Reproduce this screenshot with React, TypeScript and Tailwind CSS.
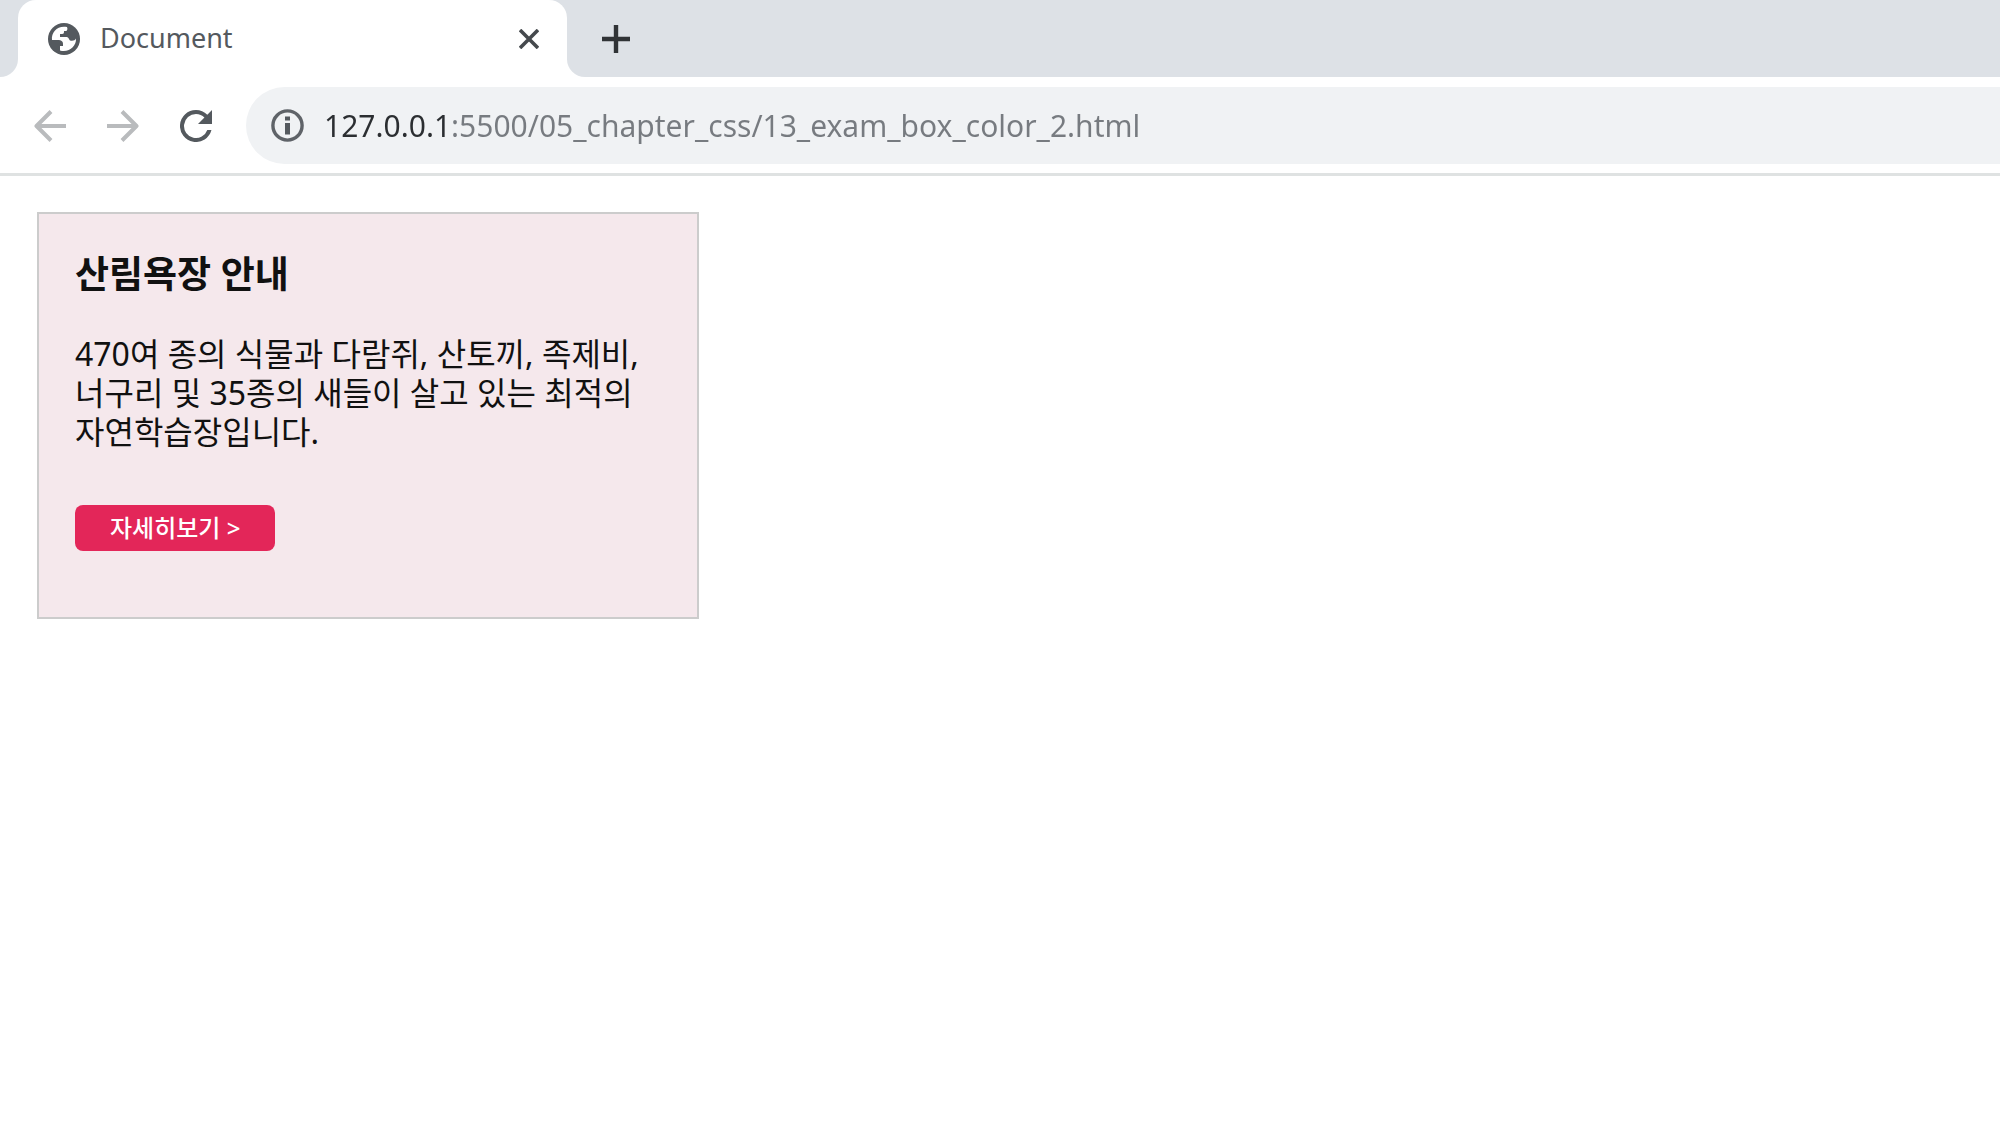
import { useState } from 'react';

const HOST = '127.0.0.1';
const PATH = ':5500/05_chapter_css/13_exam_box_color_2.html';

function GlobeIcon() {
  return (
    <svg viewBox="0 0 32 32" className="size-8 shrink-0" aria-hidden="true">
      <circle cx="16" cy="16" r="16" fill="#54595e" />
      <path d="M19 4C10 2 3 9 4 17H10C13 17 15 18 15 21V23H12V27.5C21 30 28.5 23 28 15.5C27 17.5 25 18 22 17.5C21 17 21 14.5 19 14H12V11H14C16 11 16 10 16 8H18C19 8 20 6 19 4Z" fill="#fff" />
    </svg>
  );
}

function ArrowIcon({ className = '' }: { className?: string }) {
  return (
    <svg viewBox="0 0 32 32" className={`size-8 ${className}`} fill="none" stroke="#b9bbbd" strokeWidth="4" aria-hidden="true">
      <path d="M17 1.5L2.5 16L17 30.5M2.5 16H32" strokeLinejoin="round" />
    </svg>
  );
}

function ReloadIcon() {
  return (
    <svg viewBox="4 4 16 16" className="size-8" fill="#54595e" aria-hidden="true">
      <path d="M17.65 6.35A7.96 7.96 0 0 0 12 4a8 8 0 1 0 7.73 10h-2.08A6 6 0 1 1 12 6c1.66 0 3.14.69 4.22 1.78L13 11h7V4z" />
    </svg>
  );
}

function InfoIcon() {
  return (
    <svg viewBox="0 0 33 33" className="size-[33px] shrink-0" aria-hidden="true">
      <circle cx="16.5" cy="16.5" r="14.6" fill="none" stroke="#5f6368" strokeWidth="3.4" />
      <path d="M14 7.5h5v4h-5zM14 14h5v11.5h-5z" fill="#54595e" />
    </svg>
  );
}

function TabStrip() {
  return (
    <div className="flex h-[77px] bg-[#dde1e6]">
      <div className="w-[18px] bg-white">
        <div className="h-full rounded-br-[18px] bg-[#dde1e6]" />
      </div>
      <div className="flex w-[549px] items-center rounded-t-[18px] bg-white pr-[24px] pl-[30px]">
        <GlobeIcon />
        <span className="ml-5 flex-1 text-[27px] text-[#54595e]">Document</span>
        <button type="button" aria-label="Close tab" className="p-1">
          <svg viewBox="0 0 20 20" className="size-5" fill="none" stroke="#45494d" strokeWidth="3.6">
            <path d="M1 1L19 19M19 1L1 19" />
          </svg>
        </button>
      </div>
      <div className="flex-1 bg-white">
        <div className="flex h-full items-center rounded-bl-[18px] bg-[#dde1e6] pl-[35px]">
          <button type="button" aria-label="New tab">
            <svg viewBox="0 0 28 28" className="size-7" fill="none" stroke="#303336" strokeWidth="4.4">
              <path d="M14 0V28M0 14H28" />
            </svg>
          </button>
        </div>
      </div>
    </div>
  );
}

function Toolbar() {
  const [url, setUrl] = useState(HOST + PATH);

  return (
    <div className="flex items-center border-b-3 border-[#dfe2e2] pt-[10px] pb-[9px] pl-[34px]">
      <div className="flex gap-[41px]">
        <button type="button" aria-label="Back"><ArrowIcon /></button>
        <button type="button" aria-label="Forward"><ArrowIcon className="rotate-180" /></button>
        <button type="button" aria-label="Reload"><ReloadIcon /></button>
      </div>
      <label className="ml-[34px] flex h-[77px] flex-1 items-center rounded-l-full bg-[#f0f2f4] pl-[25px]">
        <InfoIcon />
        {/* the host part is darker than the rest of the address */}
        <input
          type="text"
          aria-label="Address"
          value={url}
          onChange={e => setUrl(e.target.value)}
          className="ml-5 min-w-0 flex-1 bg-[linear-gradient(to_right,#2b2e31_127px,#777b80_127px)] bg-clip-text text-[30px] text-transparent caret-black outline-none"
        />
      </label>
    </div>
  );
}

export default function App() {
  return (
    <div className="min-h-screen bg-white font-['Noto_Sans','Noto_Sans_CJK_KR',sans-serif]">
      <TabStrip />
      <Toolbar />
      <main className="px-[37px] pt-9">
        <section className="max-w-[662px] border-2 border-[#cccccc] bg-[#f5e8ec] px-9 pt-9 pb-[66px] text-[#111]">
          <h1 className="text-[37px] leading-[48px] font-bold">산림욕장 안내</h1>
          <p className="mt-9 text-[32px] leading-[39px] break-keep">
            470여 종의 식물과 다람쥐, 산토끼, 족제비, 너구리 및 35종의 새들이 살고 있는 최적의 자연학습장입니다.
          </p>
          <button type="button" className="mt-[54px] block h-[46px] rounded-lg bg-[#e32659] px-[35px] text-[24px] leading-[46px] font-medium text-white">
            자세히보기 &gt;
          </button>
        </section>
      </main>
    </div>
  );
}
